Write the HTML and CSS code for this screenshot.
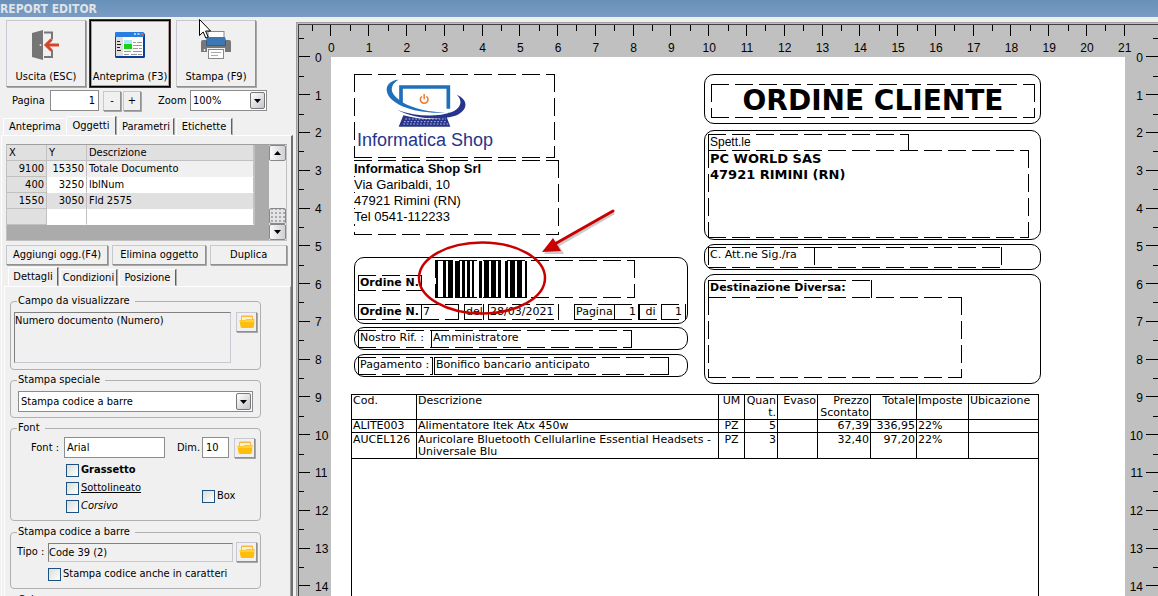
FILE: index.html
```html
<!DOCTYPE html>
<html lang="it">
<head>
<meta charset="utf-8">
<title>Report Editor</title>
<link rel="stylesheet" href="styles.css">
</head>
<body>
<svg class="defs" width="0" height="0" aria-hidden="true">
  <symbol id="folder" viewBox="0 0 16 14">
    <path d="M2 1.500q0-1 1-1h10q1 0 1 1V8H2z" fill="#fbb840"/>
    <path d="M3 2h10v4H3z" fill="#fff0d0"/>
    <path d="M.5 5h6l1-1h8L15 11.500q-.3 1.500-1.800 1.500H3.200q-1.500 0-1.700-1.500z" fill="#ffbe0c"/>
    <path d="M.7 5.500h6L8 4.500h7.200L15 7H1z" fill="#ffd040"/>
  </symbol>
  <symbol id="down" viewBox="0 0 7 4"><path d="M0 0h7L3.500 4z" fill="#000"/></symbol>
  <symbol id="up" viewBox="0 0 7 4"><path d="M0 4h7L3.500 0z" fill="#000"/></symbol>
</svg>
<header class="titlebar"><h1>REPORT EDITOR</h1></header>
<main class="main">
  <aside class="sidebar">
    <div class="toolbar">
      <button class="tool" type="button">
        <svg width="32" height="32" viewBox="0 0 32 32"><path d="M14 3.500h8v7M22 21v7h-8" fill="none" stroke="#777" stroke-width="2"/><path d="M2 4l11-3v30L2 28z" fill="#757575"/><circle cx="10.500" cy="16" r="1" fill="#ddd"/><path d="M29 16H17" stroke="#d4462c" stroke-width="3"/><path d="M21.500 10.500L16 16l5.500 5.500" fill="none" stroke="#d4462c" stroke-width="3"/></svg>
        <span>Uscita (ESC)</span>
      </button>
      <button class="tool tool-active" type="button">
        <svg width="32" height="32" viewBox="0 0 32 32"><rect x="1" y="4" width="30" height="25" rx="1.500" fill="#0c3f94"/><rect x="1" y="3" width="29" height="5" rx="1" fill="#2a7de0"/><path d="M20 4h2v2h-2zM23.500 4h2v2h-2z" fill="#a8d0ff"/><path d="M27 4h2v2h-2z" fill="#f0603a"/><rect x="2" y="8" width="27" height="19" fill="#fff"/><rect x="2" y="8" width="7" height="19" fill="#dedede"/><path d="M3 12.500h3M3 15.500h4M3 18.500h3M3 21.500h4" stroke="#222"/><rect x="10" y="11" width="8" height="6" fill="#aee6fa"/><rect x="10" y="15" width="8" height="5" fill="#17d217"/><path d="M19 13.500h3m1 0h5M19 16.500h9M19 19.500h5m1 0h3M10 22.500h7m2 0h9M10 25.500h5m2 0h6m1 0h4" stroke="#999"/></svg>
        <span>Anteprima (F3)</span>
      </button>
      <button class="tool" type="button">
        <svg width="32" height="32" viewBox="0 0 32 32"><rect x="8" y="2.500" width="16" height="10" fill="#fff" stroke="#888"/><path d="M3 11h3l2 6h16l2-6h3q2 0 2 2v10h-6v-4H7v4H1V13q0-2 2-2z" fill="#777"/><path d="M7 8h18v8H7z" fill="#3b78b5"/><path d="M6 12l1-4v8h18V8l1 4v5H6z" fill="#2d5f94"/><circle cx="4.500" cy="21" r="1" fill="#eee"/><rect x="8.500" y="20.500" width="15" height="9" fill="#fff" stroke="#888"/><path d="M11 23.500h10M11 26.500h7" stroke="#aaa"/></svg>
        <span>Stampa (F9)</span>
      </button>
    </div>
    <div class="pager">
      <label for="page">Pagina</label>
      <input id="page" class="box page-input" value="1">
      <button class="mini" type="button">-</button>
      <button class="mini" type="button">+</button>
      <label class="zoom-label" for="zoom">Zoom</label>
      <span class="combo combo-zoom"><select id="zoom"><option>100%</option></select><span class="arrow"><svg width="7" height="4"><use href="#down"/></svg></span></span>
    </div>
    <nav class="tabs tabs-main">
      <button class="tab" type="button">Anteprima</button>
      <button class="tab tab-on" type="button">Oggetti</button>
      <button class="tab" type="button">Parametri</button>
      <button class="tab" type="button">Etichette</button>
    </nav>
    <div class="panel">
      <div class="grid">
        <table class="objects">
          <colgroup><col class="o-x"><col class="o-y"><col></colgroup>
          <thead><tr><th>X</th><th>Y</th><th>Descrizione</th></tr></thead>
          <tbody>
            <tr class="alt"><td>9100</td><td>15350</td><td>Totale Documento</td></tr>
            <tr><td>400</td><td>3250</td><td>lblNum</td></tr>
            <tr class="sel"><td>1550</td><td>3050</td><td>Fld 2575</td></tr>
            <tr><td></td><td></td><td></td></tr>
          </tbody>
        </table>
        <div class="scroll">
          <button type="button" aria-label="Su"><svg width="7" height="4"><use href="#up"/></svg></button>
          <span class="track"></span>
          <span class="thumb"></span>
          <button type="button" aria-label="Giù"><svg width="7" height="4"><use href="#down"/></svg></button>
        </div>
      </div>
      <div class="actions">
        <button class="btn" type="button">Aggiungi ogg.(F4)</button>
        <button class="btn" type="button">Elimina oggetto</button>
        <button class="btn" type="button">Duplica</button>
      </div>
      <nav class="tabs tabs-sub">
        <button class="tab tab-on" type="button">Dettagli</button>
        <button class="tab" type="button">Condizioni</button>
        <button class="tab" type="button">Posizione</button>
      </nav>
      <div class="subpanel">
        <fieldset class="group g-field">
          <legend>Campo da visualizzare</legend>
          <div class="row">
            <textarea class="sunken memo" readonly aria-label="Campo da visualizzare">Numero documento (Numero)</textarea>
            <button class="pick" type="button" aria-label="Sfoglia"><svg width="16" height="14"><use href="#folder"/></svg></button>
          </div>
        </fieldset>
        <fieldset class="group g-special">
          <legend>Stampa speciale</legend>
          <span class="combo combo-special"><select aria-label="Stampa speciale"><option>Stampa codice a barre</option></select><span class="arrow"><svg width="7" height="4"><use href="#down"/></svg></span></span>
        </fieldset>
        <fieldset class="group g-font">
          <legend>Font</legend>
          <div class="row row-font">
            <label for="font">Font :</label><input id="font" class="box font-input" value="Arial">
            <label class="dim-label" for="dim">Dim.</label><input id="dim" class="box dim-input" value="10">
            <button class="pick" type="button" aria-label="Scegli font"><svg width="16" height="14"><use href="#folder"/></svg></button>
          </div>
          <div class="row checks">
            <div class="styles">
              <label class="check bold"><input type="checkbox"><span>Grassetto</span></label>
              <label class="check under"><input type="checkbox"><span>Sottolineato</span></label>
              <label class="check ital"><input type="checkbox"><span>Corsivo</span></label>
            </div>
            <label class="check check-box"><input type="checkbox"><span>Box</span></label>
          </div>
        </fieldset>
        <fieldset class="group g-code">
          <legend>Stampa codice a barre</legend>
          <div class="row row-code">
            <label for="tipo">Tipo :</label><input id="tipo" class="sunken tipo-input" value="Code 39 (2)" readonly>
            <button class="pick" type="button" aria-label="Scegli tipo"><svg width="16" height="14"><use href="#folder"/></svg></button>
          </div>
          <label class="check check-chars"><input type="checkbox"><span>Stampa codice anche in caratteri</span></label>
        </fieldset>
        <fieldset class="group g-next"><legend>Colore</legend></fieldset>
      </div>
    </div>
  </aside>
  <section class="workspace">
    <div class="desk">
      <div class="vruler"><span>0</span><span>1</span><span>2</span><span>3</span><span>4</span><span>5</span><span>6</span><span>7</span><span>8</span><span>9</span><span>10</span><span>11</span><span>12</span><span>13</span><span>14</span></div>
      <div class="center">
        <div class="hruler"><span>0</span><span>1</span><span>2</span><span>3</span><span>4</span><span>5</span><span>6</span><span>7</span><span>8</span><span>9</span><span>10</span><span>11</span><span>12</span><span>13</span><span>14</span><span>15</span><span>16</span><span>17</span><span>18</span><span>19</span><span>20</span><span>21</span></div>
        <div class="paper">
          <div class="frame f-order"></div>
          <div class="frame f-ref"></div>
          <div class="frame f-pay"></div>
          <div class="frame f-title"></div>
          <div class="frame f-to"></div>
          <div class="frame f-att"></div>
          <div class="frame f-dest"></div>

          <div class="obj o-logo">
            <svg class="mark" width="84" height="50" viewBox="285 235 252 150">
              <path d="M333 312V262H475V327" fill="none" stroke="#1f6fba" stroke-width="11"/>
              <path d="M326 240C300 241 286 258 291 277C299 313 375 347 482 338C400 341 333 316 310 283C300 267 307 250 326 240Z" fill="#1f6fba"/>
              <path d="M322 331C365 354 440 364 490 350C535 336 538 300 500 285C519 302 514 324 486 337C440 353 380 351 322 331Z" fill="#27348b"/>
              <path d="M340 347Q410 366 470 352L481 381H326Z" fill="#27348b"/>
              <path d="M346 358H468M342 366H470M340 373H474" stroke="#fff" stroke-width="2" stroke-dasharray="5 5"/>
              <path d="M396 290A11.500 11.500 0 1 0 409 290M402.500 283V299" fill="none" stroke="#ec7a2c" stroke-width="4.500"/>
            </svg>
            <span class="brand">Informatica Shop</span>
          </div>
          <address class="obj o-addr"><span class="strong">Informatica Shop Srl</span><br><span>Via Garibaldi, 10</span><br><span>47921 Rimini (RN)</span><br><span>Tel 0541-112233</span></address>

          <div class="obj strong o-num">Ordine N.</div>
          <div class="obj o-bar">
            <svg width="91" height="37" viewBox="0 0 38 10" preserveAspectRatio="none" shape-rendering="crispEdges"><path d="M0 0h1v10H0zM3 0h1v10H3zM5 0h2v10H5zM8 0h2v10H8zM11 0h1v10h-1zM13 0h1v10h-1zM15 0h1v10h-1zM18 0h1v10h-1zM20 0h2v10h-2zM23 0h2v10h-2zM26 0h1v10h-1zM29 0h1v10h-1zM31 0h2v10h-2zM34 0h2v10h-2zM37 0h1v10h-1z"/></svg>
          </div>
          <div class="obj line2 strong o-n">Ordine N.</div>
          <div class="obj line2 o-seven">7</div>
          <div class="obj line2 o-del">del</div>
          <div class="obj line2 o-date">28/03/2021</div>
          <div class="obj line2 o-pag">Pagina</div>
          <div class="obj line2 right o-p1">1</div>
          <div class="obj line2 mid o-di">di</div>
          <div class="obj line2 right o-p2">1</div>
          <div class="obj line3 o-rif">Nostro Rif. :</div>
          <div class="obj line3 o-adm">Amministratore</div>
          <div class="obj line4 o-paga">Pagamento :</div>
          <div class="obj line4 o-bon">Bonifico bancario anticipato</div>

          <h2 class="obj o-title">ORDINE CLIENTE</h2>
          <div class="obj o-spett">Spett.le</div>
          <div class="obj strong o-client">PC WORLD SAS<br>47921 RIMINI (RN)</div>
          <div class="obj o-attl">C. Att.ne Sig./ra</div>
          <div class="obj o-attv"></div>
          <div class="obj strong o-destl">Destinazione Diversa:</div>
          <div class="obj o-destv"></div>

          <div class="lines">
            <table>
              <colgroup><col class="c1"><col class="c2"><col class="c3"><col class="c4"><col class="c5"><col class="c6"><col class="c7"><col class="c8"><col></colgroup>
              <thead><tr><th>Cod.</th><th>Descrizione</th><th class="mid">UM</th><th class="right">Quan<br>t.</th><th class="right">Evaso</th><th class="right">Prezzo<br>Scontato</th><th class="right">Totale</th><th>Imposte</th><th>Ubicazione</th></tr></thead>
              <tbody>
                <tr><td>ALITE003</td><td>Alimentatore Itek Atx 450w</td><td class="mid">PZ</td><td class="right">5</td><td></td><td class="right">67,39</td><td class="right">336,95</td><td>22%</td><td></td></tr>
                <tr><td>AUCEL126</td><td>Auricolare Bluetooth Cellularline Essential Headsets -<br>Universale Blu</td><td class="mid">PZ</td><td class="right">3</td><td></td><td class="right">32,40</td><td class="right">97,20</td><td>22%</td><td></td></tr>
              </tbody>
            </table>
          </div>

          <svg class="callout" width="220" height="120" viewBox="0 0 220 120">
            <ellipse cx="71" cy="72" rx="63" ry="35.500" fill="none" stroke="#c80000" stroke-width="2.500"/>
            <g opacity=".3"><path d="M203 7L144 41" stroke="#555" stroke-width="3"/><path d="M133 48l12-14 8 14z" fill="#555"/></g>
            <path d="M202 5L142 39" stroke="#c80000" stroke-width="3" stroke-linecap="round"/>
            <path d="M131 46l11-14 8 13z" fill="#c80000"/>
          </svg>
        </div>
      </div>
      <div class="vruler vruler-right"><span>0</span><span>1</span><span>2</span><span>3</span><span>4</span><span>5</span><span>6</span><span>7</span><span>8</span><span>9</span><span>10</span><span>11</span><span>12</span><span>13</span><span>14</span></div>
    </div>
  </section>
</main>
<svg class="cursor" width="13" height="20" viewBox="0 0 13 20"><path d="M.5.500v16l3.700-3.500 2.600 6 2.400-1-2.600-6h5z" fill="#fff" stroke="#000"/></svg>
</body>
</html>
```
FILE: styles.css
```css
* { box-sizing: border-box; }
body {
  margin: 0;
  height: 100vh;
  display: flex;
  flex-direction: column;
  overflow: hidden;
  background: #f0f0f0;
  color: #000;
  font: 11px/14px "DejaVu Sans Condensed", "DejaVu Sans", sans-serif;
}
button, input, select, textarea { font: inherit; color: inherit; margin: 0; padding: 0; border-radius: 0; }
.defs { position: absolute; }
.titlebar { height: 17px; flex: none; background: linear-gradient(#6890b8, #7a9cc4); }
.titlebar h1 { margin: 0; font-size: 12px; line-height: 18px; color: #dfe3e8; }
.main { flex: 1; min-height: 0; display: flex; gap: 3px; }
.sidebar { width: 293px; flex: none; display: flex; flex-direction: column; min-height: 0; overflow: hidden; }

.toolbar { display: flex; gap: 4px; padding: 3px 0 0 6px; }
.tool, .mini, .btn, .pick {
  background: #f0f0f0;
  border: 1px solid;
  border-color: #c8c8d0 #909090 #909090 #c8c8d0;
  box-shadow: 1px 1px 0 #a8a8a8;
}
.tool {
  width: 80px;
  height: 67px;
  display: flex;
  flex-direction: column;
  align-items: center;
  justify-content: space-between;
  padding: 8px 0 2px;
  white-space: nowrap;
}
.tool:last-child { margin-left: 2px; }
.tool-active { border: 1px solid #000; box-shadow: inset 0 0 0 1px #b0a0a0, 0 0 0 1px #403030; }
.pager { display: flex; align-items: center; height: 21px; margin: 3px 0 0 12px; }
.pager label:first-child { width: 34px; }
.box { background: #fff; border: 1px solid #8c8c8c; height: 21px; padding: 0 3px; }
.page-input { width: 49px; margin: 0 4px; text-align: right; }
.mini { width: 18px; height: 20px; margin-right: 2px; }
.zoom-label { width: 28px; margin: 0 4px 0 15px; }
.combo { position: relative; display: block; height: 21px; }
.combo select { appearance: none; width: 100%; height: 21px; background: #fff; border: 1px solid #8c8c8c; padding: 0 2px; }
.combo-zoom { width: 77px; }
.arrow {
  position: absolute;
  top: 2px;
  right: 2px;
  width: 15px;
  height: 17px;
  display: grid;
  place-items: center;
  pointer-events: none;
  border: 1px solid #777;
  border-radius: 2px;
  background: linear-gradient(135deg, #fff, #c4c4cc);
}

.tabs { display: flex; align-items: flex-end; }
.tab {
  height: 17px;
  background: #f0f0f0;
  border: 1px solid;
  border-color: #fff #606060 transparent #fff;
  box-shadow: 1px 0 0 #b0b0b0;
  white-space: nowrap;
}
.tab-on { height: 19px; border-top-left-radius: 2px; }
.tabs-main { margin: 5px 0 0 3px; gap: 2px; }
.tabs-main .tab { width: 56px; }
.tabs-main .tab:first-child { width: 62px; border-right-color: transparent; box-shadow: none; padding-left: 2px; }
.tabs-main .tab-on { width: 50px; margin-left: -1px; }
.panel {
  flex: 1;
  min-height: 0;
  margin-left: 1px;
  padding: 8px 0 0 2px;
  border: solid;
  border-width: 1px 2px 0 1px;
  border-color: #fff #707070 #fff #fff;
}
.grid { display: flex; margin: 0 4px 0 2px; height: 97px; background: #ababab; border: 1px solid #c0c0c0; border-top-color: #a0a0a0; }
.objects { width: 248px; border-collapse: separate; border-spacing: 0; table-layout: fixed; border-right: 1px solid #c0c0c0; margin-right: auto; height: 80px; }
.objects .o-x { width: 40px; }
.objects .o-y { width: 40px; }
.objects th, .objects td { height: 16px; padding: 0 2px; line-height: 14px; border: solid #c0c0c0; border-width: 0 1px 1px 0; background: #fff; text-align: left; font-weight: normal; }
.objects td { text-align: right; border-bottom-color: transparent; background-clip: border-box; }
.objects td:last-child { text-align: left; }
.objects td:first-child { border-bottom-color: #c0c0c0; }
.objects th, .objects td:first-child, .objects .sel td { background: #e0e0e0; }
.objects .alt td + td { background: #f0f0f0; }
.scroll { width: 17px; display: flex; flex-direction: column; background: #f0f0f0; }
.scroll button, .thumb { height: 16px; border: 1px solid #888; border-radius: 2px; background: linear-gradient(90deg, #fafafa, #cfcfd6); display: grid; place-items: center; }
.track { flex: 1; }
.thumb { background: radial-gradient(circle, #aaa 1px, transparent 1px) 4px 2px / 4px 4px, #e4e4e8; }
.actions { display: flex; gap: 4px; margin: 4px 4px 0 2px; }
.btn { height: 20px; padding: 0; white-space: nowrap; }
.btn:nth-child(1) { flex: 102 1 0; }
.btn:nth-child(2) { flex: 94 1 0; }
.btn:nth-child(3) { flex: 76 1 0; }
.tabs-sub { margin: 2px 0 0 4px; gap: 2px; }
.tabs-sub .tab { width: 57px; }
.tabs-sub .tab-on { width: 50px; }
.subpanel { border: solid; border-width: 1px 1px 0 1px; border-color: #fff #a0a0a0 #fff #fff; padding: 7px 0 0 5px; height: 100%; }

.group { width: 251px; margin: 0 0 3px; padding: 0; border: 1px solid #b0b0b0; border-radius: 4px; min-width: 0; }
.group legend { margin-left: 6px; padding: 0 5px 0 1px; height: 14px; line-height: 14px; }
.row { display: flex; }
.sunken { background: #f0f0f0; border: 1px solid; border-color: #808080 #c8c8d0 #c8c8d0 #808080; resize: none; outline: none; }
.memo { width: 217px; height: 51px; overflow: hidden; padding: 1px 0; line-height: 14px; }
.pick { width: 21px; height: 20px; display: grid; place-items: center; }
.g-field { height: 76px; }
.g-field .row { padding: 4px 0 0 3px; gap: 5px; align-items: flex-start; }
.g-special { height: 45px; }
.combo-special { width: 235px; margin: 4px 0 0 7px; }
.g-font { height: 100px; margin-bottom: 4px; }
.row-font { align-items: center; padding: 2px 0 0 20px; }
.row-font label { width: 33px; white-space: nowrap; }
.row-font .dim-label { width: 25px; margin-left: 12px; }
.font-input { width: 101px; padding: 0 2px; }
.dim-input { width: 27px; margin-right: 5px; }
.checks { align-items: center; padding: 5px 0 0 55px; }
.styles { width: 136px; display: flex; flex-direction: column; gap: 4px; }
.check { display: flex; align-items: center; gap: 2px; height: 14px; white-space: nowrap; }
.check input { appearance: none; width: 13px; height: 13px; border: 1px solid #1c5180; background: linear-gradient(135deg, #dcdcd8, #fff); }
.check-box { margin-top: 16px; }
.bold { font-weight: bold; }
.under { text-decoration: underline; }
.ital { font-style: italic; }
.g-code { height: 64px; margin-bottom: 4px; }
.row-code { align-items: center; padding: 3px 0 0 6px; }
.row-code label { width: 31px; white-space: nowrap; }
.tipo-input { width: 185px; height: 19px; margin-right: 3px; }
.check-chars { margin: 5px 0 0 37px; }
.g-next { height: 60px; }

.workspace { flex: 1; min-width: 0; margin-top: 5px; border: solid #a0a0a0; border-width: 1px 0 0 1px; padding: 1px 0 0 1px; background: #c0c0c0; overflow: hidden; }
.desk { display: flex; height: 100%; overflow: hidden; border: solid #404040; border-width: 1px 0 0 1px; font: 12px/14px "Liberation Sans", Arial, sans-serif; }
.center { flex: none; width: 21cm; display: flex; flex-direction: column; }
.hruler { flex: none; display: flex; height: 32px; margin-left: -19px; width: 22cm; }
.hruler span {
  flex: none;
  width: 1cm;
  padding: 16px 0 0 1px;
  text-align: center;
  background: linear-gradient(#000, #000) 0 0 / 1px 6px no-repeat, linear-gradient(#000, #000) 50% 0 / 1px 11px no-repeat;
}
.vruler { flex: none; width: 32px; padding-top: 13px; }
.vruler span {
  display: flex;
  align-items: center;
  height: 1cm;
  padding: 2px 0 0 16px;
  background: linear-gradient(#000, #000) 0 0 / 5px 1px no-repeat, linear-gradient(#000, #000) 0 50% / 11px 1px no-repeat;
}
.vruler-right { flex: 1 0 33px; }
.vruler-right span {
  justify-content: flex-end;
  padding: 2px 15px 0 0;
  background: linear-gradient(#000, #000) 100% 0 / 5px 1px no-repeat, linear-gradient(#000, #000) 100% 50% / 12px 1px no-repeat;
}

/* Report page: every object sits at its own designer coordinates. */
.paper { position: relative; flex: 1; background: #fff; font: 11px/14px "DejaVu Sans", sans-serif; }
.frame { position: absolute; border: 1px solid #000; border-radius: 10px; }
.f-order { left: 23px; top: 200px; width: 334px; height: 67px; }
.f-ref { left: 23px; top: 270px; width: 334px; height: 23px; }
.f-pay { left: 23px; top: 297px; width: 334px; height: 23px; }
.f-title { left: 373px; top: 17px; width: 337px; height: 50px; }
.f-to { left: 373px; top: 73px; width: 337px; height: 110px; }
.f-att { left: 373px; top: 187px; width: 337px; height: 26px; }
.f-dest { left: 373px; top: 217px; width: 337px; height: 110px; }
.obj {
  --h: repeating-linear-gradient(90deg, #000 0 18px, transparent 18px 24px);
  --v: repeating-linear-gradient(180deg, #000 0 18px, transparent 18px 24px);
  position: absolute;
  padding: 1px 0 0 2px;
  white-space: nowrap;
  background: var(--h) 0 0 / 100% 1px no-repeat, var(--h) 0 100% / 100% 1px no-repeat, var(--v) 0 0 / 1px 100% no-repeat, var(--v) 100% 0 / 1px 100% no-repeat;
}
.strong { font-weight: bold; }
.right { text-align: right; }
.mid { text-align: center; }
.o-logo { left: 23px; top: 17px; width: 201px; height: 84px; padding: 4px 0 0 3px; }
.mark { display: block; margin-left: 28px; }
.brand { display: block; font: 18px/24px "Liberation Sans", Arial, sans-serif; color: #27348b; }
.o-addr { left: 23px; top: 103px; width: 205px; height: 75px; padding: 1px 0 0; font: 13px/16px "Liberation Sans", Arial, sans-serif; }
.o-addr span { background: #fff; }
.o-num { left: 27px; top: 218px; width: 64px; height: 16px; }
.o-bar { left: 104px; top: 203px; width: 200px; height: 38px; padding-left: 1px; }
.o-bar svg { display: block; }
.line2 { top: 247px; height: 16px; }
.o-n { left: 27px; width: 64px; }
.o-seven { left: 90px; width: 38px; }
.o-del { left: 133px; width: 20px; }
.o-date { left: 157px; width: 71px; }
.o-pag { left: 243px; width: 41px; }
.o-p1 { left: 283px; width: 25px; padding-right: 3px; }
.o-di { left: 308px; width: 23px; padding-left: 0; }
.o-p2 { left: 330px; width: 25px; padding-right: 4px; }
.line3 { top: 273px; height: 18px; }
.o-rif { left: 27px; width: 74px; }
.o-adm { left: 100px; width: 201px; }
.line4 { top: 300px; height: 18px; }
.o-paga { left: 27px; width: 75px; }
.o-bon { left: 103px; width: 235px; }
.o-title { left: 380px; top: 27px; width: 324px; height: 34px; margin: 0; padding: 0; text-align: center; font-size: 28px; line-height: 34px; }
.o-spett { left: 377px; top: 77px; width: 201px; height: 17px; padding-top: 0; font: 12px/16px "Liberation Sans", Arial, sans-serif; }
.o-client { left: 377px; top: 93px; width: 321px; height: 88px; font-size: 13px; line-height: 16px; }
.o-attl { left: 377px; top: 190px; width: 107px; height: 21px; }
.o-attv { left: 483px; top: 190px; width: 188px; height: 21px; }
.o-destl { left: 377px; top: 223px; width: 164px; height: 18px; }
.o-destv { left: 377px; top: 240px; width: 254px; height: 81px; }
.lines { position: absolute; left: 20px; top: 337px; bottom: 0; width: 688px; border: solid #000; border-width: 1px 1px 0; }
.lines table { width: 100%; table-layout: fixed; border-collapse: separate; border-spacing: 0; }
.lines th, .lines td { padding: 0 1px; font-weight: normal; line-height: 12px; vertical-align: top; white-space: nowrap; text-align: left; border: solid #000; border-width: 0 1px 1px 0; }
.lines tr:last-child td { padding-top: 1px; }
.lines .right { text-align: right; }
.lines .mid { text-align: center; }
.lines th:last-child, .lines td:last-child { border-right: 0; }
.lines thead tr:last-child th { padding-top: 0; }
.c1 { width: 65px; }
.c2 { width: 302px; }
.c3 { width: 26px; }
.c4 { width: 33px; }
.c5 { width: 40px; }
.c6 { width: 53px; }
.c7 { width: 46px; }
.c8 { width: 52px; }
.callout { position: absolute; left: 80px; top: 149px; }
.cursor { position: absolute; left: 199px; top: 19px; }
```
